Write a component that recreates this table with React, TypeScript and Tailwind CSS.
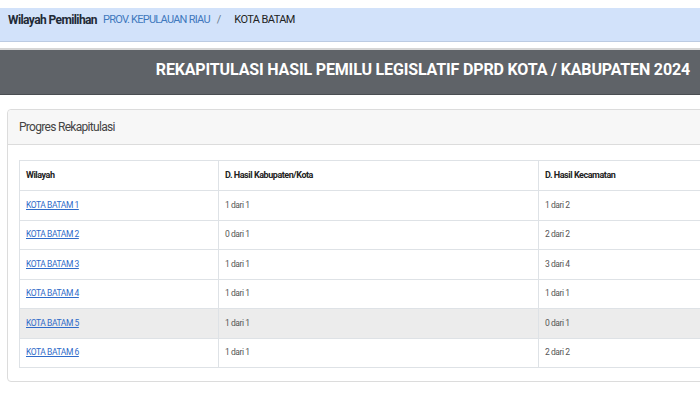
const rows = [
  { name: "KOTA BATAM 1", kab: "1 dari 1", kec: "1 dari 2" },
  { name: "KOTA BATAM 2", kab: "0 dari 1", kec: "2 dari 2" },
  { name: "KOTA BATAM 3", kab: "1 dari 1", kec: "3 dari 4" },
  { name: "KOTA BATAM 4", kab: "1 dari 1", kec: "1 dari 1" },
  { name: "KOTA BATAM 5", kab: "1 dari 1", kec: "0 dari 1" },
  { name: "KOTA BATAM 6", kab: "1 dari 1", kec: "2 dari 2" },
];

export default function App() {
  return (
    <div className="w-[700px] h-[393px] overflow-hidden bg-white font-['Roboto',sans-serif] text-[#333]">
      {/* breadcrumb */}
      <div className="mt-[8px] h-[34px] bg-[#d2e2fa] border-b border-[#bccbe2] flex items-start pt-[4px] px-[8px] text-[11px] leading-[16px]">
        <span className="font-bold text-[#1f2a36] text-[12px] tracking-[-0.6px]">Wilayah Pemilihan</span>
        <span className="ml-[6px] text-[#3f78bd] tracking-[-0.75px]">PROV. KEPULAUAN RIAU</span>
        <span className="ml-[7px] mr-[13px] text-[#6b7a8c]">/</span>
        <span className="text-[#222] tracking-[-0.6px]">KOTA BATAM</span>
      </div>

      {/* title band */}
      <div className="mt-[6px] h-[47px] bg-[#5f6368] border-t-2 border-[#d6d6d6] border-b border-b-[#4a4e52] flex items-center justify-end pr-[10px] pb-[4px]">
        <h1 className="text-white font-bold text-[16px] tracking-[-0.15px]">
          REKAPITULASI HASIL PEMILU LEGISLATIF DPRD KOTA / KABUPATEN 2024
        </h1>
      </div>

      {/* card */}
      <div className="mt-[14px] ml-[7px] w-[720px] border border-[#dcdcdc] rounded-[4px] pb-[13px]">
        <div className="h-[35px] bg-[#f7f7f7] border-b border-[#dcdcdc] flex items-center px-[11px] text-[12px] tracking-[-0.7px] text-[#444] rounded-t-[4px]">
          Progres Rekapitulasi
        </div>
        <div className="pt-[15px] pl-[11px]">
          <table className="w-[720px] border-collapse text-[8.5px] tracking-[-0.45px]">
            <thead>
              <tr className="h-[30px] border border-[#dee2e6] text-[9px] tracking-[-0.45px]">
                <th className="w-[199px] text-left font-bold px-[6px] border-r border-[#dee2e6] text-[#222]">
                  Wilayah
                </th>
                <th className="w-[320px] text-left font-bold px-[6px] border-r border-[#dee2e6] text-[#222]">
                  D. Hasil Kabupaten/Kota
                </th>
                <th className="text-left font-bold px-[6px] text-[#222]">D. Hasil Kecamatan</th>
              </tr>
            </thead>
            <tbody>
              {rows.map((r, i) => (
                <tr
                  key={r.name}
                  className={`h-[29.5px] border border-[#dee2e6] ${i === 4 ? "bg-[#ececec]" : "bg-white"}`}
                >
                  <td className="px-[6px] border-r border-[#dee2e6]">
                    <a href="#" className="text-[#2f6bc9] underline">
                      {r.name}
                    </a>
                  </td>
                  <td className="px-[6px] border-r border-[#dee2e6] text-[#555]">{r.kab}</td>
                  <td className="px-[6px] text-[#555]">{r.kec}</td>
                </tr>
              ))}
            </tbody>
          </table>
        </div>
      </div>
    </div>
  );
}
